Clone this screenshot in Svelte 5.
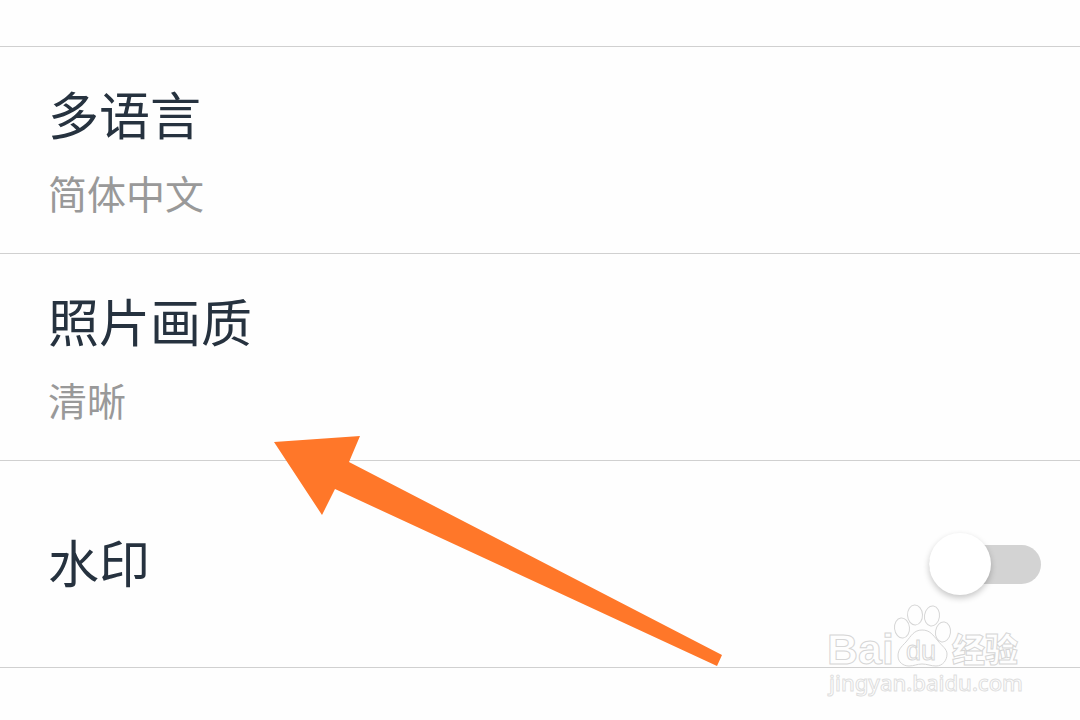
<script lang="ts">
  type Setting = { id: string; title: string; value: string };

  const settings: Setting[] = [
    { id: 'language', title: '多语言', value: '简体中文' },
    { id: 'quality', title: '照片画质', value: '清晰' },
  ];

  const toes = [
    { cx: 78, cy: 28, turn: -6 },
    { cx: 91, cy: 15, turn: -3 },
    { cx: 108, cy: 16, turn: 8 },
    { cx: 119, cy: 32, turn: 8 },
  ];

  let watermark = $state(false);
</script>

<main class="settings">
  <div class="list">
    {#each settings as setting (setting.id)}
      <button class="row" type="button">
        <span class="title">{setting.title}</span>
        <span class="value">{setting.value}</span>
      </button>
    {/each}

    <label class="row row-switch">
      <span class="title">水印</span>
      <input class="switch" type="checkbox" role="switch" bind:checked={watermark} />
    </label>
  </div>

  <svg class="arrow" viewBox="0 0 450 232" aria-hidden="true">
    <path d="M0 6 86 0 75 26 448 219 443 230 61 53 48 79Z" fill="#ff7729" />
  </svg>

  <svg class="brand" viewBox="0 0 204 104" role="img" aria-label="Baidu 经验">
    <g class="outline">
      <text class="latin" x="3" y="64">Bai</text>
      {#each toes as toe}
        <ellipse
          cx={toe.cx}
          cy={toe.cy}
          rx="7.5"
          ry="10"
          transform="rotate({toe.turn} {toe.cx} {toe.cy})"
        />
      {/each}
      <path d="M98 30C90 30 87 36 82 42C77 47 74 50 74 56C74 62 79 66 85 66C90 66 93 64 98 64C103 64 107 66 112 66C119 66 123 60 123 54C123 49 118 46 114 41C109 35 106 30 98 30Z" />
      <text class="du" x="82" y="60">du</text>
      <text class="cjk" x="128" y="62">经验</text>
      <text class="site" x="5" y="91">jingyan.baidu.com</text>
    </g>
  </svg>
</main>

<style>
  :global(body) {
    margin: 0;
    background: #fefefe;
  }

  .settings {
    position: relative;
    box-sizing: border-box;
    min-height: 100vh;
    padding-top: 46px;
    font-family: 'Noto Sans CJK SC', sans-serif;
  }

  .list {
    border-top: 1px solid #d0d0d0;
  }

  .row {
    display: flex;
    flex-direction: column;
    align-items: flex-start;
    gap: 14px;
    box-sizing: border-box;
    width: 100%;
    min-height: 207px;
    padding: 34px 36px 34px 48px;
    border: 0;
    border-bottom: 1px solid #d0d0d0;
    background: none;
    font-family: inherit;
    text-align: left;
    cursor: pointer;
  }

  .row-switch {
    flex-direction: row;
    align-items: center;
    justify-content: space-between;
  }

  .title {
    padding-bottom: 6px;
    color: #26323f;
    font-size: 51px;
    line-height: 64px;
  }

  .value {
    color: #999;
    font-size: 39px;
    line-height: 54px;
  }

  .switch {
    appearance: none;
    display: flex;
    align-items: center;
    width: 115px;
    height: 62px;
    margin: 0;
    cursor: pointer;
  }

  .switch::before {
    content: '';
    flex: none;
    width: 112px;
    height: 39px;
    border-radius: 20px;
    background: #d3d3d3;
  }

  .switch::after {
    content: '';
    flex: none;
    width: 62px;
    height: 62px;
    margin-left: -112px;
    border-radius: 50%;
    background: #fff;
    box-shadow: 0 3px 6px rgba(0, 0, 0, 0.22);
  }

  .switch:checked::before {
    background: #ffbb94;
  }

  .switch:checked::after {
    margin-left: -62px;
  }

  .arrow {
    position: absolute;
    top: 436px;
    left: 274px;
    width: 450px;
    height: 232px;
    pointer-events: none;
  }

  .brand {
    position: absolute;
    top: 600px;
    right: 52px;
    width: 204px;
    height: 104px;
    pointer-events: none;
  }

  .outline {
    fill: #fefefe;
    stroke: #d6d6d6;
    stroke-width: 1;
  }

  .latin {
    font: bold 43px 'Liberation Sans', sans-serif;
  }

  .du {
    font: 27px 'Liberation Sans', sans-serif;
  }

  .cjk {
    font: 900 33px 'Noto Sans CJK SC', sans-serif;
  }

  .site {
    font: 500 22px 'Noto Sans', sans-serif;
    stroke: #dedede;
  }
</style>
